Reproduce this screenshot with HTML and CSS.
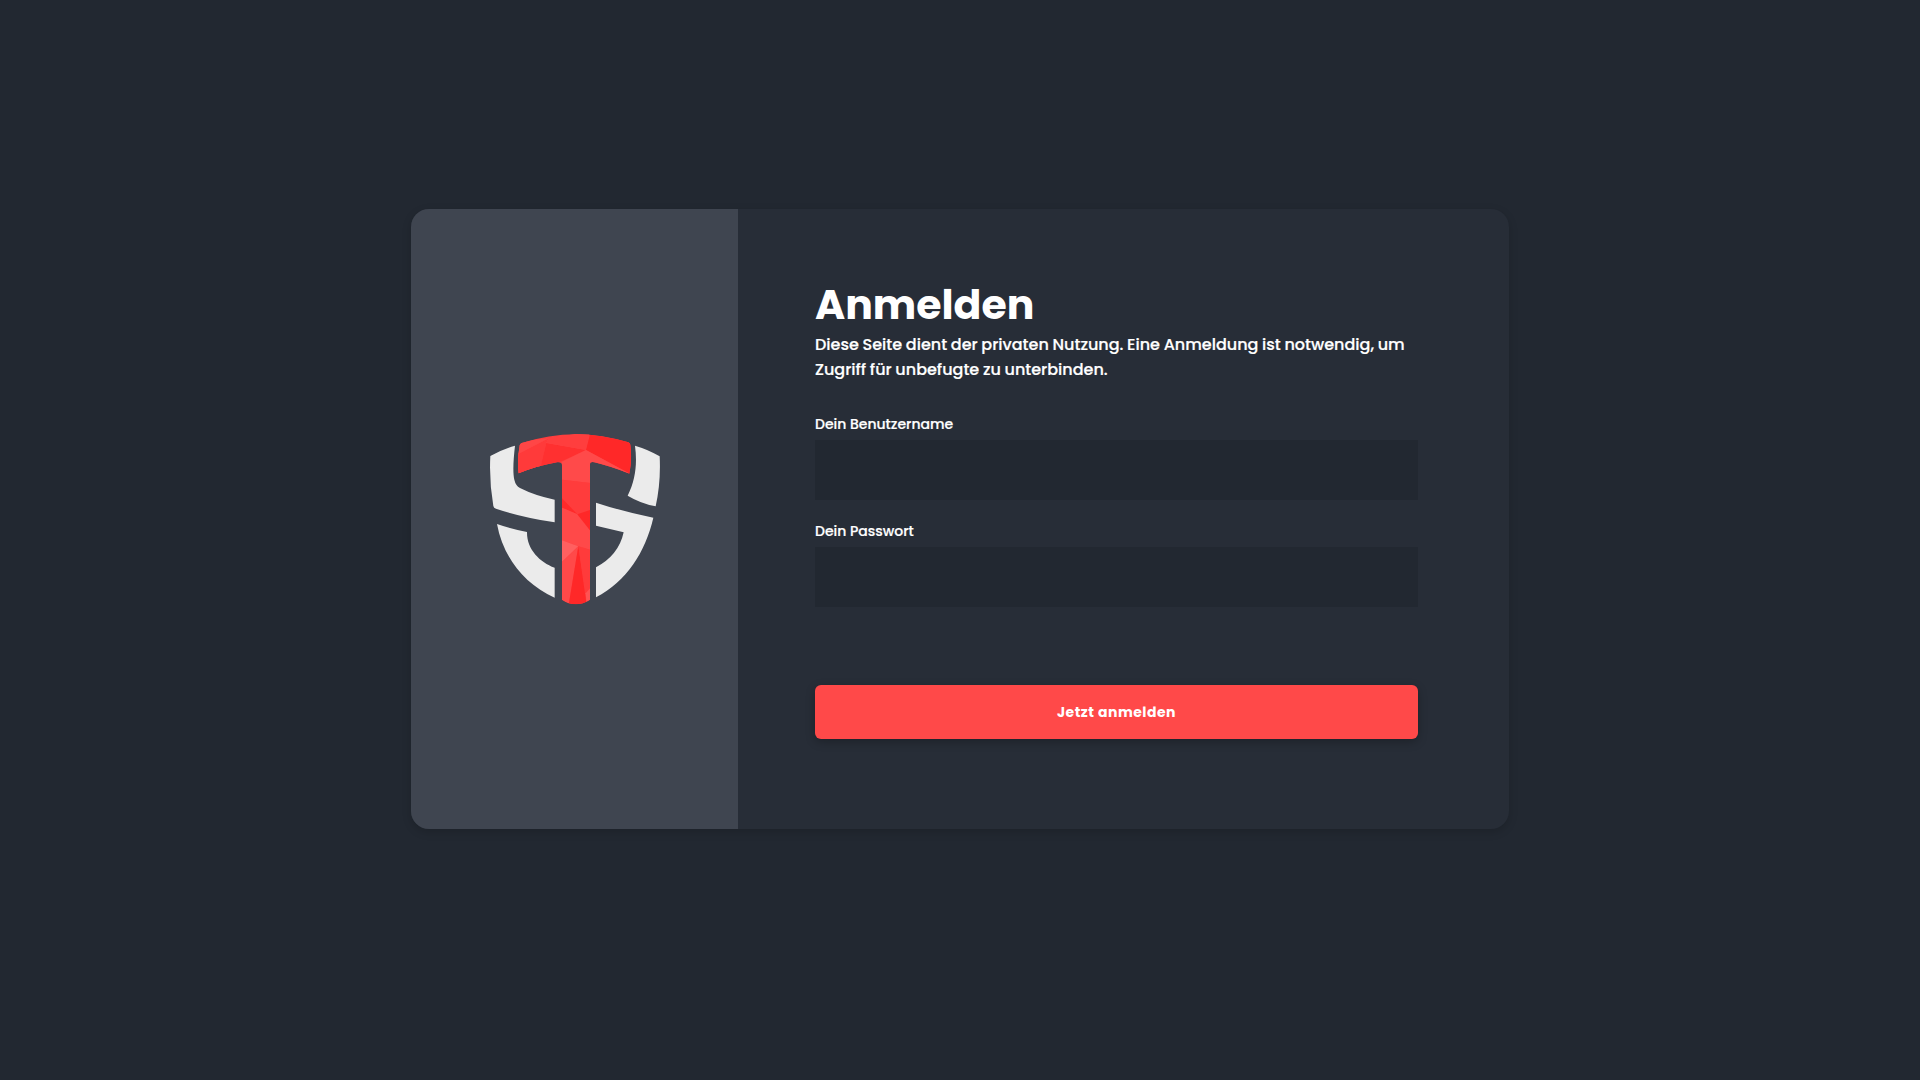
FILE: index.html
```html
<!DOCTYPE html>
<html lang="de">
<head>
  <meta charset="utf-8">
  <title>Anmelden</title>
  <link rel="stylesheet" href="styles.css">
</head>
<body>
  <main class="card">
    <aside class="brand">
      <svg class="logo" viewBox="27 24 513 516" role="img" aria-label="Logo">
        <g fill="#ebebeb">
          <path d="M31 93Q66 73 105 62C100 105 98 143 103 164Q107 182 120 189Q165 212 224 224V292Q125 277 48 251Q41 249 40 243Q27 167 31 93Z"/>
          <path d="M51 297Q94 312 141 321C140 372 179 411 224 428V518C132 477 69 396 51 297Z"/>
          <path d="M348 233Q430 260 520 278C496 382 440 468 348 517V427Q416 391 431 322L348 302Z"/>
          <path d="M465 62Q506 74 539 94Q543 171 527 244Q481 235 443 212C467 164 472 115 465 62Z"/>
        </g>
        <clipPath id="hammer">
          <path d="M125 54Q285 2 445 52Q450 54 451 59Q457 102 448 146Q393 124 343 112Q330 109 330 119V524Q287 551 246 524V121Q246 111 232 112Q172 122 116 145Q111 104 119 61Q120 56 125 54Z"/>
        </clipPath>
        <g clip-path="url(#hammer)">
          <path fill="#ff3d3d" d="M100 20H470V550H100Z"/>
          <path fill="#ff4a4a" d="M110 88L206 40L330 20L318 75L246 63L199 54L182 125L110 148Z"/>
          <path fill="#ff3a3a" d="M110 88L206 40L199 54L182 125L110 148Z"/>
          <path fill="#ff4646" d="M110 50L206 40L110 90Z"/>
          <path fill="#ff3030" d="M182 125L199 54L318 75L246 108Z"/>
          <path fill="#ff3e3e" d="M206 40L330 20L318 75L199 54Z"/>
          <path fill="#ff2828" d="M330 28L460 50V152L318 75Z"/>
          <path fill="#ff4a4a" d="M318 75L450 146L330 112V174L246 164V110Z"/>
          <path fill="#ff3c3c" d="M246 164L330 174V255L292 268L246 222Z"/>
          <path fill="#ff2a2a" d="M246 220L292 268L246 248Z"/>
          <path fill="#ff4949" d="M246 248L292 268L330 316V374L295 364L246 346Z"/>
          <path fill="#ff2828" d="M292 268L330 255V316Z"/>
          <path fill="#ff6060" d="M246 346L295 364L246 411Z"/>
          <path fill="#ff4949" d="M246 411L295 364L266 540H246Z"/>
          <path fill="#ff2828" d="M295 364L320 540H266Z"/>
          <path fill="#ff3b3b" d="M295 364L330 374V492L317 505Z"/>
          <path fill="#ff5353" d="M317 505L330 490V540H320Z"/>
        </g>
      </svg>
    </aside>
    <section class="content">
      <h1 class="title">Anmelden</h1>
      <p class="intro">Diese Seite dient der privaten Nutzung. Eine Anmeldung ist notwendig, um<br>Zugriff für unbefugte zu unterbinden.</p>
      <form class="form">
        <label class="label" for="user">Dein Benutzername</label>
        <input class="input" id="user" type="text">
        <label class="label" for="password">Dein Passwort</label>
        <input class="input" id="password" type="password">
        <button class="submit" type="button">Jetzt anmelden</button>
      </form>
    </section>
  </main>
</body>
</html>
```
FILE: styles.css
```css
* {
  box-sizing: border-box;
}

body {
  margin: 0;
  min-height: 100vh;
  padding-top: 209px;
  background: #222831;
  color: #fff;
  font-family: Poppins, Inter, sans-serif;
}

.card {
  display: flex;
  width: 1098px;
  height: 620px;
  margin: 0 auto;
  border-radius: 18px;
  background: #272d37;
  box-shadow: 0 3px 10px rgba(0, 0, 0, 0.16);
  overflow: hidden;
}

.brand {
  display: flex;
  align-items: center;
  justify-content: center;
  flex: 0 0 327px;
  background: #3f4550;
}

.logo {
  width: 171px;
  height: 172px;
}

.content {
  flex: 1;
  padding: 72px 91px 0 77px;
}

.title {
  margin: 0;
  font-size: 41px;
  line-height: 48px;
  font-weight: 700;
}

.intro {
  margin: 3px 0 32px;
  font-size: 16px;
  line-height: 25px;
  font-weight: 500;
  word-spacing: -0.47px;
  -webkit-text-stroke: 0.2px #fff;
}

.form {
  display: flex;
  flex-direction: column;
}

.label {
  font-size: 14px;
  line-height: 20px;
  font-weight: 500;
  margin-bottom: 6px;
  -webkit-text-stroke: 0.2px #fff;
}

.input {
  height: 60px;
  margin: 0 0 21px;
  padding: 0 16px;
  border: 0;
  background: #222831;
  color: #fff;
  font: inherit;
}

.submit {
  height: 54px;
  margin-top: 57px;
  border: 0;
  border-radius: 6px;
  background: #ff4949;
  color: #fff;
  box-shadow: 0 3px 10px rgba(0, 0, 0, 0.25);
  font: 700 14px/20px Poppins, Inter, sans-serif;
  letter-spacing: 0.5px;
}
```
